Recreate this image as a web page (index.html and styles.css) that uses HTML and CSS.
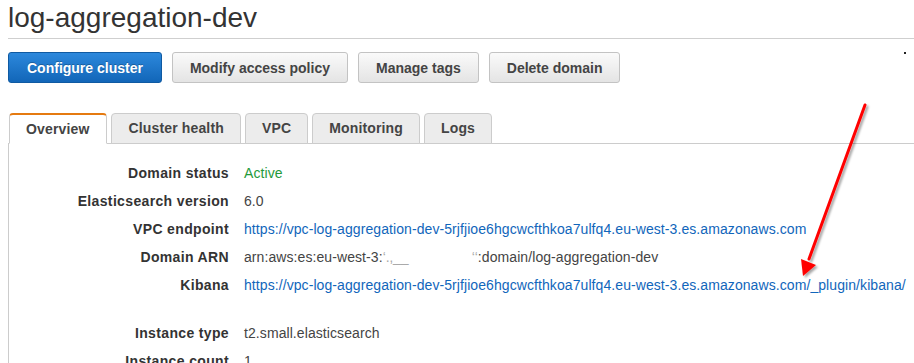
FILE: index.html
```html
<!DOCTYPE html>
<html lang="en">
<head>
<meta charset="utf-8">
<title>log-aggregation-dev</title>
<link rel="stylesheet" href="styles.css">
</head>
<body>
<div class="page">
  <h1 class="title">log-aggregation-dev</h1>
  <div class="actions">
    <button class="btn btn-primary">Configure cluster</button>
    <button class="btn">Modify access policy</button>
    <button class="btn">Manage tags</button>
    <button class="btn">Delete domain</button>
    <span class="speck"></span>
  </div>
  <div class="tabs">
    <div class="tab active">Overview</div>
    <div class="tab">Cluster health</div>
    <div class="tab">VPC</div>
    <div class="tab">Monitoring</div>
    <div class="tab">Logs</div>
  </div>
  <div class="panel">
    <dl class="details">
      <dt>Domain status</dt><dd class="ok">Active</dd>
      <dt>Elasticsearch version</dt><dd>6.0</dd>
      <dt>VPC endpoint</dt><dd><a href="#">https://vpc-log-aggregation-dev-5rjfjioe6hgcwcfthkoa7ulfq4.eu-west-3.es.amazonaws.com</a></dd>
      <dt>Domain ARN</dt><dd>arn:aws:es:eu-west-3:<span class="redact">‘.‚__</span><span class="gap"></span><span class="redact">‘‘</span>:domain/log-aggregation-dev</dd>
      <dt>Kibana</dt><dd><a href="#">https://vpc-log-aggregation-dev-5rjfjioe6hgcwcfthkoa7ulfq4.eu-west-3.es.amazonaws.com/_plugin/kibana/</a></dd>
      <div class="spacer"></div>
      <dt>Instance type</dt><dd>t2.small.elasticsearch</dd>
      <dt>Instance count</dt><dd>1</dd>
    </dl>
  </div>
</div>
<svg class="annotation" width="914" height="363" viewBox="0 0 914 363">
  <defs>
    <filter id="shadow" x="-20%" y="-20%" width="140%" height="140%">
      <feDropShadow dx="2" dy="2" stdDeviation="1.2" flood-color="#000" flood-opacity="0.35"/>
    </filter>
  </defs>
  <g filter="url(#shadow)">
    <line x1="865" y1="105" x2="809" y2="259" stroke="#ff0000" stroke-width="3" stroke-linecap="round"/>
    <polygon points="803,276 801,259 816,265" fill="#ff0000"/>
  </g>
</svg>
</body>
</html>
```
FILE: styles.css
```css
* {
  box-sizing: border-box;
}

html, body {
  margin: 0;
  padding: 0;
  background: #fff;
  overflow: hidden;
}

body {
  width: 914px;
  height: 363px;
  position: relative;
  font-family: "Liberation Sans", Arial, sans-serif;
  color: #444;
}

.page {
  padding-left: 8px;
  height: 363px;
  display: flex;
  flex-direction: column;
}

.title {
  margin: 2px 0 0 0;
  padding-bottom: 4px;
  font-size: 28px;
  line-height: 32px;
  font-weight: normal;
  color: #333;
  border-bottom: 1px solid #cfcfcf;
}

.actions {
  display: flex;
  align-items: flex-start;
  gap: 10px;
  margin-top: 13px;
}

.btn {
  height: 31px;
  padding: 0 17px;
  font-family: "Liberation Sans", Arial, sans-serif;
  font-size: 14px;
  font-weight: bold;
  color: #444;
  background: linear-gradient(#fafafa, #e4e4e4);
  border: 1px solid #c3c3c3;
  border-radius: 3px;
  cursor: pointer;
}

.btn-primary {
  color: #fff;
  padding: 0 18px;
  background: linear-gradient(#2c88dc, #1266b8);
  border-color: #0f5aa2;
  text-shadow: 0 -1px 0 rgba(0, 0, 0, 0.25);
}

.speck {
  margin-left: auto;
  margin-right: 8px;
  width: 2px;
  height: 2px;
  background: #222;
}

.tabs {
  display: flex;
  gap: 4px;
  margin-top: 30px;
  height: 31px;
  flex-shrink: 0;
  padding-left: 1px;
  border-bottom: 1px solid #ccc;
}

.tab {
  height: 31px;
  margin-bottom: -1px;
  padding: 0 16px;
  font-size: 14px;
  font-weight: bold;
  letter-spacing: 0.15px;
  line-height: 29px;
  color: #444;
  background: #ececec;
  border: 1px solid #ccc;
  border-bottom: 1px solid #ccc;
  border-radius: 4px 4px 0 0;
}

.tab.active {
  background: #fff;
  border-top: 2px solid #e57a10;
  border-bottom-color: #fff;
  line-height: 28px;
  padding: 0 17px 0 16px;
}

.panel {
  flex: 1;
  min-height: 0;
  overflow: hidden;
  border-left: 1px solid #ccc;
  padding-top: 15px;
}

.details {
  display: grid;
  grid-template-columns: 220px 1fr;
  column-gap: 15px;
  margin: 0;
  font-size: 14px;
  line-height: 28px;
}

.details dt {
  text-align: right;
  font-weight: bold;
  letter-spacing: 0.35px;
  color: #333;
}

.details dd {
  margin: 0;
  color: #444;
  letter-spacing: 0.08px;
  white-space: nowrap;
}

.details dd.ok {
  color: #1f9a3a;
}

.details a {
  color: #1166bb;
  text-decoration: none;
}

.redact {
  color: #aaa;
}

.gap {
  display: inline-block;
  width: 63px;
}

.spacer {
  grid-column: 1 / -1;
  height: 20px;
}

.annotation {
  position: absolute;
  left: 0;
  top: 0;
  pointer-events: none;
}
```
